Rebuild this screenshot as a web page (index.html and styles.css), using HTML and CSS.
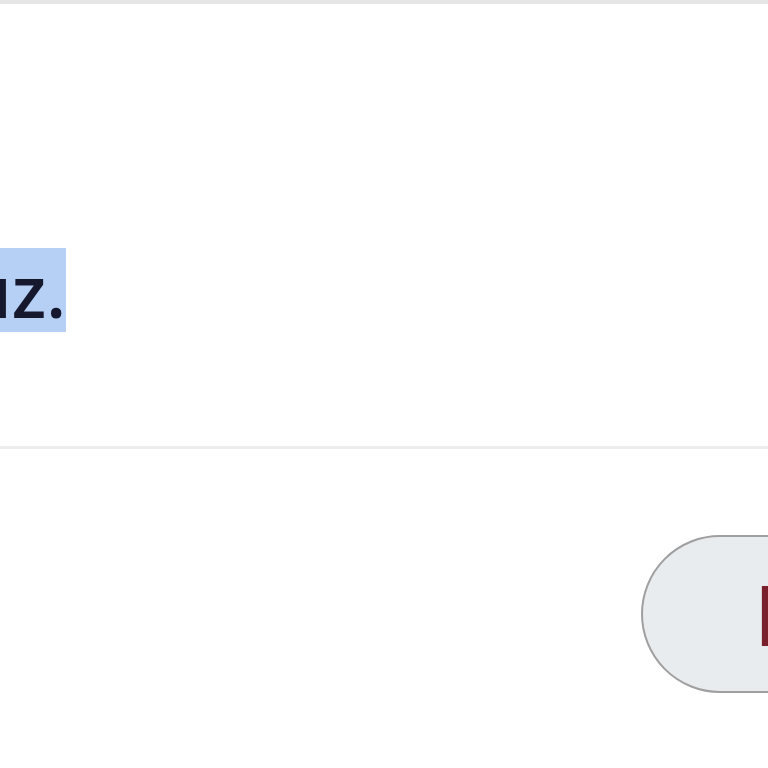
FILE: index.html
```html
<!DOCTYPE html>
<html lang="tr">
<head>
<meta charset="utf-8">
<link rel="stylesheet" href="styles.css">
</head>
<body>
<div class="page">
  <section class="content">
    <div class="line"><span class="sel">nız.</span></div>
  </section>
  <footer class="actions">
    <button class="btn">Devam</button>
  </footer>
</div>
</body>
</html>
```
FILE: styles.css
```css
html, body {
  margin: 0;
  padding: 0;
  background: #ffffff;
  overflow: hidden;
}
.page {
  width: 768px;
  height: 768px;
  display: flex;
  flex-direction: column;
  border-top: 4px solid #e6e6e6;
  box-sizing: border-box;
  font-family: "Open Sans", "Noto Sans", sans-serif;
}
.content {
  height: 445px;
  box-sizing: border-box;
  padding-top: 244px;
  border-bottom: 3px solid #eeeeee;
}
.line {
  width: 66px;
  display: flex;
  justify-content: flex-end;
  white-space: nowrap;
}
.sel {
  background: #b5d0f4;
  color: #16192e;
  font-size: 72px;
  line-height: 84px;
  font-weight: 600;
  letter-spacing: 0;
}
.actions {
  display: flex;
  padding-top: 86px;
  padding-left: 641px;
}
.btn {
  flex: none;
  height: 158px;
  width: 400px;
  box-sizing: border-box;
  border: 2px solid #9f9f9f;
  border-radius: 80px;
  background: #e9ecef;
  color: #7a1e2c;
  font-family: "Open Sans", "Noto Sans", sans-serif;
  font-size: 84px;
  font-weight: 600;
  text-align: left;
  padding: 0 0 0 111px;
  line-height: 1;
}
```
